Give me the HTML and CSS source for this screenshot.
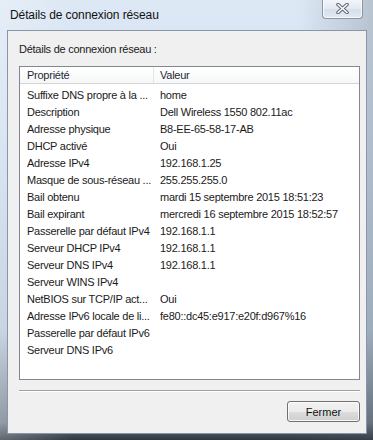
FILE: index.html
```html
<!DOCTYPE html>
<html lang="fr">
<head>
  <meta charset="UTF-8" />
  <title>Détails de connexion réseau</title>
  <link rel="stylesheet" href="styles.css">
</head>
<body>
  <div class="window">
    <div class="titlebar">
      <span class="title">Détails de connexion réseau</span>
      <button class="close" title="Fermer">
        <svg width="13" height="11" viewBox="0 0 13 11">
          <path d="M2 1.5 L11 9.5 M11 1.5 L2 9.5" stroke="#5d6674" stroke-width="3.6" stroke-linecap="round"/>
          <path d="M2 1.5 L11 9.5 M11 1.5 L2 9.5" stroke="#ffffff" stroke-width="1.6" stroke-linecap="round"/>
        </svg>
      </button>
    </div>

    <div class="client">
      <div class="caption">Détails de connexion réseau :</div>

      <div class="listview">
        <div class="lv-head">
          <div class="col">Propriété</div>
          <div class="col">Valeur</div>
        </div>
        <div class="lv-body">
          <div class="row"><span>Suffixe DNS propre à la ...</span><span>home</span></div>
          <div class="row"><span>Description</span><span>Dell Wireless 1550 802.11ac</span></div>
          <div class="row"><span>Adresse physique</span><span>B8-EE-65-58-17-AB</span></div>
          <div class="row"><span>DHCP activé</span><span>Oui</span></div>
          <div class="row"><span>Adresse IPv4</span><span>192.168.1.25</span></div>
          <div class="row"><span>Masque de sous-réseau ...</span><span>255.255.255.0</span></div>
          <div class="row"><span>Bail obtenu</span><span>mardi 15 septembre 2015 18:51:23</span></div>
          <div class="row"><span>Bail expirant</span><span>mercredi 16 septembre 2015 18:52:57</span></div>
          <div class="row"><span>Passerelle par défaut IPv4</span><span>192.168.1.1</span></div>
          <div class="row"><span>Serveur DHCP IPv4</span><span>192.168.1.1</span></div>
          <div class="row"><span>Serveur DNS IPv4</span><span>192.168.1.1</span></div>
          <div class="row"><span>Serveur WINS IPv4</span><span></span></div>
          <div class="row"><span>NetBIOS sur TCP/IP act...</span><span>Oui</span></div>
          <div class="row"><span>Adresse IPv6 locale de li...</span><span>fe80::dc45:e917:e20f:d967%16</span></div>
          <div class="row"><span>Passerelle par défaut IPv6</span><span></span></div>
          <div class="row"><span>Serveur DNS IPv6</span><span></span></div>
        </div>
      </div>

      <div class="separator"></div>

      <div class="actions">
        <button class="btn">Fermer</button>
      </div>
    </div>
  </div>
</body>
</html>
```

FILE: styles.css
```css
:root {
  --client-bg: #f0f0f0;
  --text: #1a1a1a;
  --lv-border: #828790;
  --divider: #e3e5e8;
}

body {
  margin: 0;
  width: 373px;
  height: 440px;
  overflow: hidden;
  font-family: 'Liberation Sans', Arial, sans-serif;
  font-size: 11px;
  letter-spacing: -0.25px;
  color: var(--text);
}

.window {
  width: 373px;
  height: 440px;
  box-sizing: border-box;
  display: flex;
  flex-direction: column;
  background:
    linear-gradient(to right, rgba(255,255,255,0.25), rgba(255,255,255,0) 20%, rgba(255,255,255,0) 80%, rgba(80,90,100,0.25)),
    linear-gradient(to bottom, #dde8f5 0%, #cddcee 35%, #b7c7d9 75%, #6f7b88 96%, #2e3640 100%);
}

.titlebar {
  height: 30px;
  display: flex;
  align-items: flex-start;
  padding: 0 10px 0 10px;
  flex-shrink: 0;
}

.title {
  font-size: 12px;
  line-height: 12px;
  margin-top: 9px;
  letter-spacing: -0.1px;
  color: #111;
}

.close {
  margin-left: auto;
  margin-top: -1px;
  width: 41px;
  height: 20px;
  padding: 0;
  border: 1px solid #8b95a3;
  border-top: none;
  border-radius: 0 0 4px 4px;
  background: linear-gradient(to bottom, #f4f7fb 0%, #e4eaf2 50%, #d5deea 51%, #e3e9f1 100%);
  display: flex;
  align-items: center;
  justify-content: center;
  box-shadow: inset 0 0 0 1px rgba(255,255,255,0.7);
}

.client {
  flex: 1;
  margin: 0 6px 6px 7px;
  border: 1px solid #8796a8;
  background: var(--client-bg);
  padding: 12px 6px 0 11px;
  display: flex;
  flex-direction: column;
}

.caption {
  line-height: 12px;
  height: 12px;
  margin-bottom: 11px;
}

.listview {
  height: 314px;
  box-sizing: border-box;
  border: 1px solid var(--lv-border);
  background: #fff;
}

.lv-head {
  display: grid;
  grid-template-columns: 133px 1fr;
  height: 16px;
  border-bottom: 1px solid #d5d5d5;
  background: linear-gradient(to bottom, #ffffff, #f6f7f8);
}

.lv-head .col {
  line-height: 16px;
  padding-left: 7px;
  color: #1e2a3a;
}

.lv-head .col + .col {
  border-left: 1px solid var(--divider);
  padding-left: 6px;
}

.lv-body {
  padding-top: 2px;
}

.row {
  display: grid;
  grid-template-columns: 134px 1fr;
  height: 17px;
  line-height: 18px;
}

.row span {
  white-space: nowrap;
  overflow: hidden;
  padding-left: 7px;
}

.row span + span {
  padding-left: 6px;
}

.separator {
  margin-top: 10px;
  height: 0;
  border-top: 1px solid #a0a0a0;
  border-bottom: 1px solid #ffffff;
}

.actions {
  display: flex;
  justify-content: flex-end;
  margin-top: 9px;
}

.btn {
  width: 73px;
  height: 21px;
  padding: 0;
  font-family: 'Liberation Sans', Arial, sans-serif;
  font-size: 11px;
  color: #111;
  border: 1px solid #707070;
  border-radius: 3px;
  background: linear-gradient(to bottom, #f2f2f2 0%, #ebebeb 50%, #dddddd 51%, #cfcfcf 100%);
  box-shadow: inset 0 0 0 1px rgba(255,255,255,0.8);
}
```
